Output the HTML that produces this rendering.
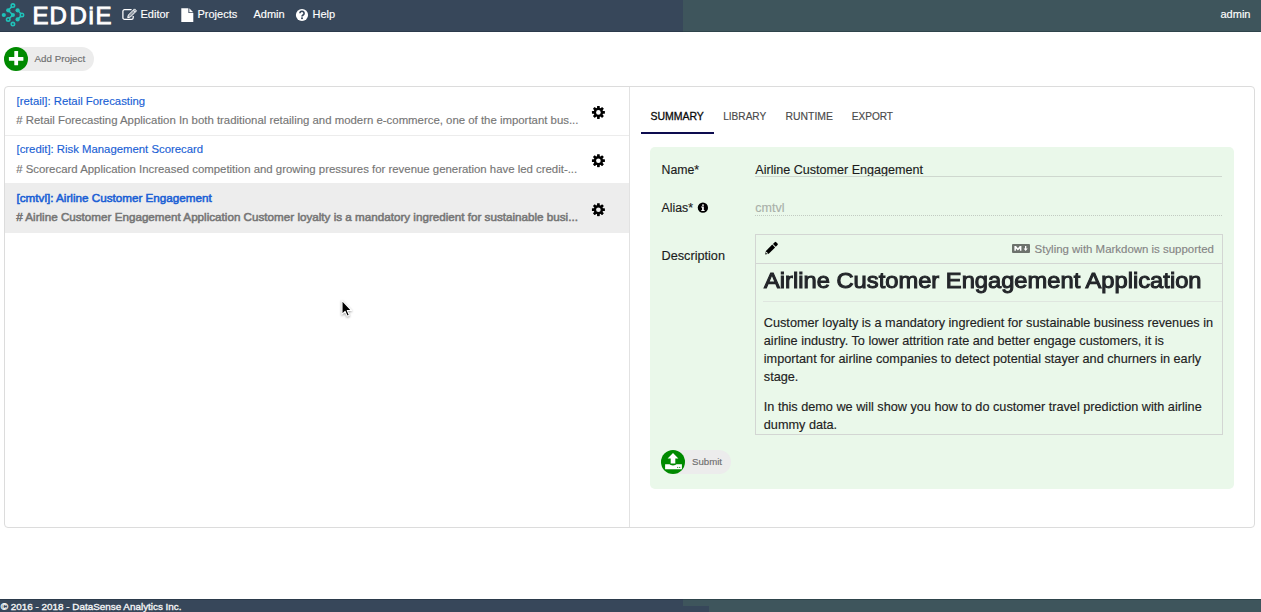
<!DOCTYPE html>
<html><head><meta charset="utf-8"><style>
html,body{margin:0;padding:0;}
body{width:1261px;height:612px;position:relative;overflow:hidden;background:#fff;font-family:"Liberation Sans",sans-serif;}
.t{position:absolute;white-space:nowrap;-webkit-text-stroke:0.15px currentColor;}
.r{position:absolute;}
svg.r{overflow:visible;}
</style></head><body>
<div class="r" style="left:0px;top:0px;width:683px;height:31px;background:#37475a"></div>
<div class="r" style="left:683px;top:0px;width:578px;height:31px;background:#3e555c"></div>
<div class="r" style="left:0px;top:31px;width:683px;height:1px;background:#2b3a4b"></div>
<div class="r" style="left:683px;top:31px;width:578px;height:1px;background:#2e444b"></div>
<svg class="r" style="left:0;top:0" width="30" height="31" viewBox="0 0 30 31">
<g stroke="#1fc2b9" stroke-width="1.5" fill="none">
<polyline points="12.9,5.6 8.2,10.3 12.9,15 8.2,19.4"/>
<polyline points="17.6,10.3 22,15 17.6,19.4"/>
</g>
<g fill="#1fc2b9">
<circle cx="8.2" cy="10.3" r="2.1"/><circle cx="17.6" cy="10.3" r="2.1"/>
<circle cx="3.8" cy="15" r="2.1"/><circle cx="12.9" cy="15" r="2.1"/>
<circle cx="17.6" cy="19.4" r="2.1"/>
</g>
<g stroke="#1fc2b9" stroke-width="1.6" fill="#37475a">
<circle cx="12.9" cy="5.6" r="1.7"/><circle cx="22" cy="15" r="1.7"/>
<circle cx="8.2" cy="19.4" r="1.7"/><circle cx="12.9" cy="24.1" r="1.7"/>
</g></svg>
<div class="t" style="left:32.6px;top:0px;font-size:24px;line-height:31px;color:#fff;font-weight:400;-webkit-text-stroke:0.9px #fff;">E</div>
<div class="t" style="left:49.6px;top:0px;font-size:24px;line-height:31px;color:#fff;font-weight:400;-webkit-text-stroke:0.9px #fff;">D</div>
<div class="t" style="left:69.4px;top:0px;font-size:24px;line-height:31px;color:#fff;font-weight:400;-webkit-text-stroke:0.9px #fff;">D</div>
<div class="t" style="left:88.5px;top:0px;font-size:24px;line-height:31px;color:#fff;font-weight:400;-webkit-text-stroke:0.9px #fff;">i</div>
<div class="t" style="left:95.6px;top:0px;font-size:24px;line-height:31px;color:#fff;font-weight:400;-webkit-text-stroke:0.9px #fff;">E</div>
<svg class="r" style="left:120px;top:7px" width="18" height="15" viewBox="0 0 18 15">
<path d="M11.6 2.6 H4.6 a1.7 1.7 0 0 0 -1.7 1.7 V10.7 a1.7 1.7 0 0 0 1.7 1.7 H11.5 a1.7 1.7 0 0 0 1.7 -1.7 V9.0" stroke="#fff" stroke-width="1.25" fill="none"/>
<path d="M7.7 10.6 L8.4 8.0 L14.5 1.9 L16.5 3.9 L10.4 10.0 Z" fill="rgba(255,255,255,0.45)" stroke="#fff" stroke-width="1.0" stroke-linejoin="round"/>
<path d="M13.3 3.1 L15.3 5.1" stroke="#fff" stroke-width="0.9"/>
</svg>
<div class="t" style="left:140.5px;top:7px;font-size:11px;line-height:14px;color:#fff;font-weight:400;">Editor</div>
<svg class="r" style="left:181px;top:8px" width="13" height="15" viewBox="0 0 13 15">
<path d="M0.3 0.2 H7.4 V5.0 H12.3 V14 H0.3 Z" fill="#fff"/>
<path d="M8.3 0.3 L12.2 4.2 H8.3 Z" fill="#fff"/>
</svg>
<div class="t" style="left:197.5px;top:7px;font-size:11px;line-height:14px;color:#fff;font-weight:400;">Projects</div>
<div class="t" style="left:253.5px;top:7px;font-size:11px;line-height:14px;color:#fff;font-weight:400;">Admin</div>
<svg class="r" style="left:295px;top:8px" width="14" height="14" viewBox="0 0 14 14">
<circle cx="7" cy="7" r="6.1" fill="#fff"/>
<path d="M4.9 5.3 a2.1 2.0 0 1 1 3.2 1.7 c-0.8 0.5 -1.1 0.8 -1.1 1.6" stroke="#37475a" stroke-width="1.6" fill="none"/>
<rect x="6.1" y="9.4" width="1.8" height="1.7" fill="#37475a"/>
</svg>
<div class="t" style="left:312.5px;top:7px;font-size:11px;line-height:14px;color:#fff;font-weight:400;">Help</div>
<div class="t" style="left:1220.5px;top:7px;font-size:11px;line-height:14px;color:#fff;font-weight:400;">admin</div>
<div class="r" style="left:16px;top:47px;width:78px;height:24px;background:#ececec;border-radius:0 12px 12px 0"></div>
<svg class="r" style="left:4px;top:47px" width="24" height="24" viewBox="0 0 24 24">
<circle cx="12" cy="12" r="12" fill="#008a00"/>
<rect x="4.9" y="10.0" width="14.5" height="3.8" rx="0.5" fill="#fff"/>
<rect x="10.3" y="4.0" width="3.8" height="14.2" rx="0.5" fill="#fff"/>
</svg>
<div class="t" style="left:34.5px;top:52px;font-size:9.8px;line-height:13px;color:#6f6f6f;font-weight:400;">Add Project</div>
<div class="r" style="left:4px;top:86px;width:1251px;height:442px;box-sizing:border-box;border:1px solid #dcdcdc;border-radius:4px;background:#fff"></div>
<div class="r" style="left:629px;top:87px;width:1px;height:440px;background:#e2e2e2"></div>
<div class="r" style="left:5px;top:135px;width:624px;height:1px;background:#ececec"></div>
<div class="r" style="left:5px;top:183px;width:624px;height:50px;background:#ededed"></div>
<div class="t" style="left:16.5px;top:94px;font-size:11.35px;line-height:15px;color:#1a5fd5;font-weight:400;">[retail]: Retail Forecasting</div>
<div class="t" style="left:16.2px;top:113px;font-size:11.4px;line-height:15px;color:#767676;font-weight:400;"># Retail Forecasting Application In both traditional retailing and modern e-commerce, one of the important bus...</div>
<div class="t" style="left:16.5px;top:142px;font-size:11.35px;line-height:15px;color:#1a5fd5;font-weight:400;">[credit]: Risk Management Scorecard</div>
<div class="t" style="left:16.2px;top:162px;font-size:11.4px;line-height:15px;color:#767676;font-weight:400;"># Scorecard Application Increased competition and growing pressures for revenue generation have led credit-...</div>
<div class="t" style="left:16.5px;top:190px;font-size:11.68px;line-height:15px;color:#1a5fd5;font-weight:400;-webkit-text-stroke:0.55px #1a5fd5;">[cmtvl]: Airline Customer Engagement</div>
<div class="t" style="left:16.2px;top:209px;font-size:11.66px;line-height:15px;color:#767676;font-weight:400;-webkit-text-stroke:0.55px #767676;"># Airline Customer Engagement Application Customer loyalty is a mandatory ingredient for sustainable busi...</div>
<svg class="r" style="left:591px;top:105px" width="14" height="14" viewBox="-7.40 -7.40 14 14"><defs><mask id="gm112"><rect x="-7" y="-7" width="14" height="14" fill="#fff"/><circle r="2.3" fill="#000"/></mask></defs><g fill="#000" mask="url(#gm112)"><rect x="-1.35" y="-6.5" width="2.7" height="3.4" rx="0.4" transform="rotate(0)"/><rect x="-1.35" y="-6.5" width="2.7" height="3.4" rx="0.4" transform="rotate(45)"/><rect x="-1.35" y="-6.5" width="2.7" height="3.4" rx="0.4" transform="rotate(90)"/><rect x="-1.35" y="-6.5" width="2.7" height="3.4" rx="0.4" transform="rotate(135)"/><rect x="-1.35" y="-6.5" width="2.7" height="3.4" rx="0.4" transform="rotate(180)"/><rect x="-1.35" y="-6.5" width="2.7" height="3.4" rx="0.4" transform="rotate(225)"/><rect x="-1.35" y="-6.5" width="2.7" height="3.4" rx="0.4" transform="rotate(270)"/><rect x="-1.35" y="-6.5" width="2.7" height="3.4" rx="0.4" transform="rotate(315)"/><circle r="4.7"/></g></svg>
<svg class="r" style="left:591px;top:153px" width="14" height="14" viewBox="-7.40 -7.70 14 14"><defs><mask id="gm160"><rect x="-7" y="-7" width="14" height="14" fill="#fff"/><circle r="2.3" fill="#000"/></mask></defs><g fill="#000" mask="url(#gm160)"><rect x="-1.35" y="-6.5" width="2.7" height="3.4" rx="0.4" transform="rotate(0)"/><rect x="-1.35" y="-6.5" width="2.7" height="3.4" rx="0.4" transform="rotate(45)"/><rect x="-1.35" y="-6.5" width="2.7" height="3.4" rx="0.4" transform="rotate(90)"/><rect x="-1.35" y="-6.5" width="2.7" height="3.4" rx="0.4" transform="rotate(135)"/><rect x="-1.35" y="-6.5" width="2.7" height="3.4" rx="0.4" transform="rotate(180)"/><rect x="-1.35" y="-6.5" width="2.7" height="3.4" rx="0.4" transform="rotate(225)"/><rect x="-1.35" y="-6.5" width="2.7" height="3.4" rx="0.4" transform="rotate(270)"/><rect x="-1.35" y="-6.5" width="2.7" height="3.4" rx="0.4" transform="rotate(315)"/><circle r="4.7"/></g></svg>
<svg class="r" style="left:591px;top:202px" width="14" height="14" viewBox="-7.40 -7.70 14 14"><defs><mask id="gm209"><rect x="-7" y="-7" width="14" height="14" fill="#fff"/><circle r="2.3" fill="#000"/></mask></defs><g fill="#000" mask="url(#gm209)"><rect x="-1.35" y="-6.5" width="2.7" height="3.4" rx="0.4" transform="rotate(0)"/><rect x="-1.35" y="-6.5" width="2.7" height="3.4" rx="0.4" transform="rotate(45)"/><rect x="-1.35" y="-6.5" width="2.7" height="3.4" rx="0.4" transform="rotate(90)"/><rect x="-1.35" y="-6.5" width="2.7" height="3.4" rx="0.4" transform="rotate(135)"/><rect x="-1.35" y="-6.5" width="2.7" height="3.4" rx="0.4" transform="rotate(180)"/><rect x="-1.35" y="-6.5" width="2.7" height="3.4" rx="0.4" transform="rotate(225)"/><rect x="-1.35" y="-6.5" width="2.7" height="3.4" rx="0.4" transform="rotate(270)"/><rect x="-1.35" y="-6.5" width="2.7" height="3.4" rx="0.4" transform="rotate(315)"/><circle r="4.7"/></g></svg>
<div class="t" style="left:650.4px;top:109px;font-size:10.5px;line-height:14px;color:#0a0a0a;font-weight:400;-webkit-text-stroke:0.3px #0a0a0a;">SUMMARY</div>
<div class="t" style="left:723.2px;top:110px;font-size:10.1px;line-height:13px;color:#4a4a4a;font-weight:400;">LIBRARY</div>
<div class="t" style="left:785.6px;top:110px;font-size:10.4px;line-height:14px;color:#4a4a4a;font-weight:400;">RUNTIME</div>
<div class="t" style="left:851.7px;top:110px;font-size:10.1px;line-height:13px;color:#4a4a4a;font-weight:400;">EXPORT</div>
<div class="r" style="left:641px;top:132px;width:73px;height:2px;background:#0d0c4f"></div>
<div class="r" style="left:650px;top:147px;width:584px;height:342px;background:#eaf8ea;border-radius:5px"></div>
<div class="t" style="left:661.5px;top:162px;font-size:12.3px;line-height:16px;color:#1c1c1c;font-weight:400;">Name*</div>
<div class="t" style="left:755.3px;top:162px;font-size:12.57px;line-height:16px;color:#1c1c1c;font-weight:400;">Airline Customer Engagement</div>
<div class="r" style="left:755px;top:176px;width:467px;height:1px;background:#cfd8cf"></div>
<div class="t" style="left:661.5px;top:200px;font-size:12.3px;line-height:16px;color:#1c1c1c;font-weight:400;">Alias*</div>
<svg class="r" style="left:697px;top:202px" width="12" height="12" viewBox="0 0 12 12">
<circle cx="5.9" cy="5.7" r="5.15" fill="#000"/>
<circle cx="6.0" cy="3.1" r="0.95" fill="#fff"/>
<path d="M4.2 4.6 H6.8 V7.9 H7.6 V9.0 H4.3 V7.9 H5.1 V5.6 H4.2 Z" fill="#fff"/>
</svg>
<div class="t" style="left:755.3px;top:200px;font-size:12.5px;line-height:16px;color:#a9b0a9;font-weight:400;">cmtvl</div>
<div class="r" style="left:755px;top:215px;width:467px;height:1px;background-image:linear-gradient(to right,#c2cbc2 50%,transparent 50%);background-size:2px 1px"></div>
<div class="t" style="left:661.5px;top:248px;font-size:12.7px;line-height:17px;color:#1c1c1c;font-weight:400;">Description</div>
<div class="r" style="left:755px;top:234px;width:468px;height:201px;box-sizing:border-box;border:1px solid #d3d6d3"></div>
<div class="r" style="left:756px;top:263px;width:466px;height:1px;background:#d3d6d3"></div>
<svg class="r" style="left:764px;top:241px" width="16" height="16" viewBox="0 0 16 16">
<path d="M1.2 13.5 L1.91 9.97 L8.27 3.61 L11.09 6.43 L4.73 12.79 Z" fill="#000"/>
<path d="M11.8 5.72 L8.98 2.9 L10.7 1.18 Q11.46 0.42 12.22 1.18 L13.52 2.48 Q14.28 3.24 13.52 4.0 Z" fill="#000"/>
<path d="M2.05 11.05 L3.6 12.6" stroke="#eaf8ea" stroke-width="1.1"/>
</svg>
<svg class="r" style="left:1012px;top:244px" width="18" height="9" viewBox="0 0 18 9">
<rect x="0" y="0" width="18" height="9" rx="1" fill="#6d736d"/>
<path d="M2.4 6.8 V2 H4.0 L5.9 4.3 L7.8 2 H9.4 V6.8 H7.9 V4.4 L5.9 6.6 L3.9 4.4 V6.8 Z" fill="#fff"/>
<path d="M13.0 2 H14.3 V4.5 H15.7 L13.65 6.9 L11.6 4.5 H13.0 Z" fill="#fff"/>
</svg>
<div class="t" style="left:1034.6px;top:242px;font-size:11.45px;line-height:15px;color:#858585;font-weight:400;">Styling with Markdown is supported</div>
<div class="t" style="left:763.9px;top:265px;font-size:22.7px;line-height:30px;color:#23262a;font-weight:400;transform:scaleX(1.045);transform-origin:0 0;-webkit-text-stroke:1.05px #23262a;">Airline Customer Engagement Application</div>
<div class="r" style="left:763px;top:301px;width:459px;height:1px;background:#dfe6df"></div>
<div class="t" style="left:763.8px;top:315px;font-size:12.7px;line-height:17px;color:#222;font-weight:400;">Customer loyalty is a mandatory ingredient for sustainable business revenues in</div>
<div class="t" style="left:763.8px;top:333px;font-size:12.7px;line-height:17px;color:#222;font-weight:400;">airline industry. To lower attrition rate and better engage customers, it is</div>
<div class="t" style="left:763.8px;top:351px;font-size:12.7px;line-height:17px;color:#222;font-weight:400;">important for airline companies to detect potential stayer and churners in early</div>
<div class="t" style="left:763.8px;top:369px;font-size:12.7px;line-height:17px;color:#222;font-weight:400;">stage.</div>
<div class="t" style="left:763.8px;top:399px;font-size:12.7px;line-height:17px;color:#222;font-weight:400;">In this demo we will show you how to do customer travel prediction with airline</div>
<div class="t" style="left:763.8px;top:417px;font-size:12.7px;line-height:17px;color:#222;font-weight:400;">dummy data.</div>
<div class="r" style="left:673px;top:450px;width:58px;height:24px;background:#ececec;border-radius:0 12px 12px 0"></div>
<svg class="r" style="left:661px;top:450px" width="24" height="24" viewBox="0 0 24 24">
<circle cx="12" cy="12" r="12" fill="#008a00"/>
<path d="M12 3.1 L17.4 8.4 H14.3 V13.4 H9.7 V8.4 H6.6 Z" fill="#fff"/>
<path d="M4.1 14.3 H8.6 Q9.2 15.4 12 15.4 Q14.8 15.4 15.4 14.3 H20.9 V19.2 H4.1 Z" fill="#fff"/>
<rect x="16.2" y="16.9" width="1" height="1" fill="#008a00"/><rect x="18.2" y="16.9" width="1" height="1" fill="#008a00"/>
</svg>
<div class="t" style="left:692px;top:455px;font-size:9.65px;line-height:13px;color:#6f6f6f;font-weight:400;">Submit</div>
<div class="r" style="left:0px;top:599px;width:1261px;height:13px;background:#37475a"></div>
<div class="r" style="left:683px;top:600px;width:578px;height:6px;background:#3e555c"></div>
<div class="r" style="left:709px;top:606px;width:552px;height:6px;background:#3e555c"></div>
<div class="r" style="left:0px;top:599px;width:683px;height:1px;background:#2b3a4b"></div>
<div class="r" style="left:683px;top:599px;width:578px;height:1px;background:#2e444b"></div>
<div class="t" style="left:0.8px;top:600px;font-size:9.9px;line-height:13px;color:#f4f5f6;font-weight:400;-webkit-text-stroke:0.35px #f4f5f6;">&copy; 2016 - 2018 - DataSense Analytics Inc.</div>
<svg class="r" style="left:339px;top:298px;filter:drop-shadow(0 1px 1px rgba(0,0,0,.35))" width="16" height="22" viewBox="0 0 16 22">
<path d="M3.0 2.4 V16.4 L6.1 13.4 L8.2 18.2 L10.4 17.2 L8.3 12.5 H12.6 Z" fill="#000" stroke="#fff" stroke-width="1.1" stroke-linejoin="round"/>
</svg>
</body></html>
